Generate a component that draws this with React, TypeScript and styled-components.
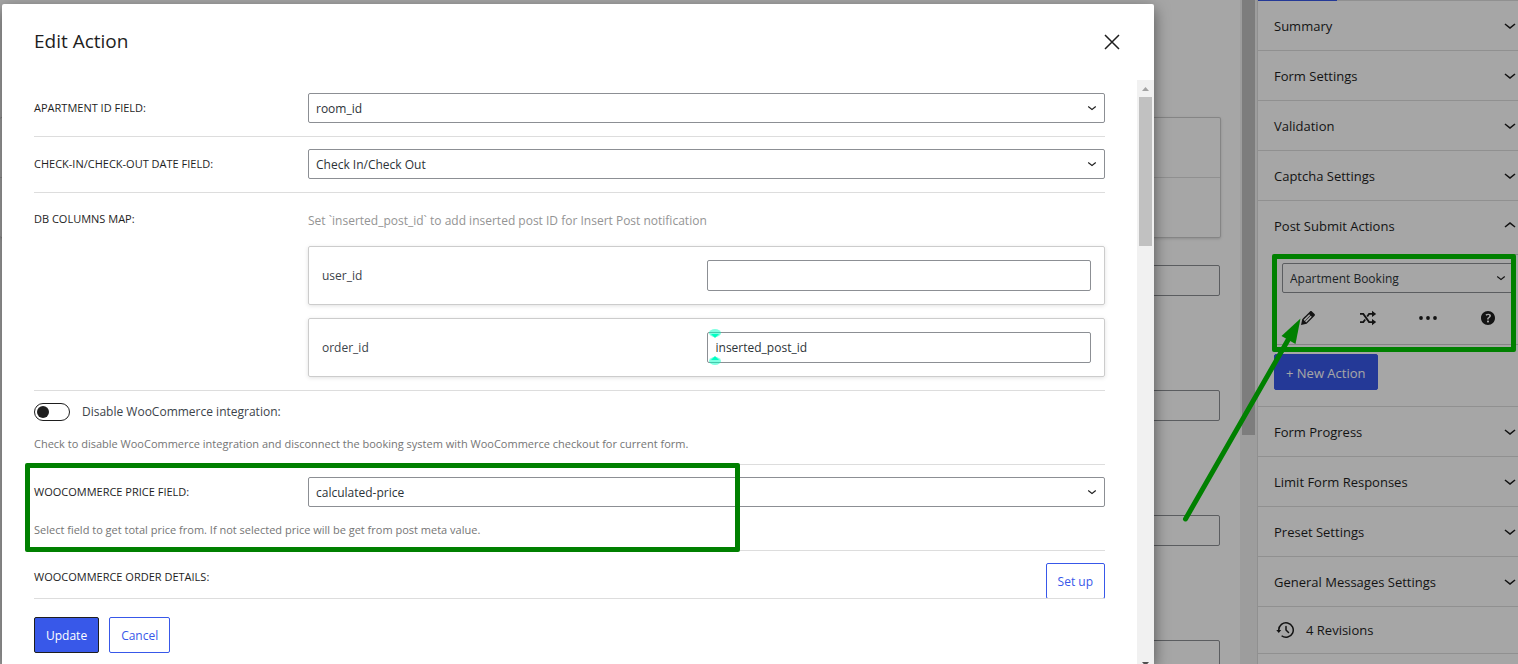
import React from "react";
import styled, { createGlobalStyle } from "styled-components";

const Global = createGlobalStyle`
  *, *::before, *::after { box-sizing: border-box; }
  body {
    margin: 0;
    font-family: "Open Sans", "Noto Sans", sans-serif;
    font-size: 13px;
    line-height: 20px;
    color: #1e1e1e;
    background: #fff;
  }
  button, input, select { font: inherit; color: inherit; }
`;

const Screen = styled.div`
  position: relative;
  display: flex;
  height: 100vh;
  min-height: 400px;
  overflow: hidden;
`;

/* Editor canvas behind the dialog */
const Canvas = styled.main`
  flex: 1;
  min-width: 0;
  overflow: hidden;
  display: flex;
  flex-direction: column;
  padding: 117px 20px 0 0;
`;

const FieldGroup = styled.div`
  flex: none;
  height: 121px;
  margin-right: -1px;
  border: 1px solid #ccc;
  border-left: 0;
  border-radius: 2px;
  box-shadow: 0 1px 3px rgba(0, 0, 0, 0.15);
`;

const GroupRow = styled.div`
  height: 60px;
  border-bottom: 1px solid #ddd;
`;

const CanvasInput = styled.input`
  flex: none;
  height: 31px;
  margin: 27px 0 67px 200px;
  border: 1px solid #8c8f94;
  border-radius: 2px;
`;

const CanvasScroll = styled.div`
  flex: none;
  width: 17px;
  padding: 0 2px;
  background: #f1f1f1;
`;

const CanvasThumb = styled.div`
  height: 435px;
  background: #c1c1c1;
`;

const Sidebar = styled.aside`
  flex: none;
  width: 261px;
  border-left: 1px solid #ddd;
  overflow: hidden;
`;

const TabLine = styled.div`
  height: 1px;
  background: #ddd;
  &::before {
    content: "";
    display: block;
    width: 79px;
    height: 1px;
    background: #3858e9;
  }
`;

const Section = styled.section`
  border-bottom: 1px solid #ddd;
`;

const SectionToggle = styled.button`
  display: flex;
  align-items: center;
  justify-content: space-between;
  width: 100%;
  height: 49px;
  padding: 0 0 0 16px;
  border: 0;
  background: none;
  font-weight: 500;
  text-align: left;
`;

const ActionPanel = styled.div`
  padding: 4px 0 16px 16px;
`;

const ActionCard = styled.div`
  height: 91px;
  margin-bottom: 9px;
  padding: 8px 0 0 7px;
  border: 1px solid #ccc;
  border-right: 0;
`;

const ActionIcons = styled.div`
  display: grid;
  grid-template-columns: repeat(4, 60px);
  margin: 9px 0 0 -4px;
`;

const IconButton = styled.button`
  display: flex;
  align-items: center;
  justify-content: center;
  height: 32px;
  padding: 0;
  border: 0;
  background: none;
`;

const RevisionsButton = styled.button`
  display: flex;
  align-items: center;
  gap: 8px;
  width: 100%;
  height: 46px;
  padding: 0 16px;
  border: 0;
  background: none;
  font-weight: 500;
`;

const Button = styled.button<{ $kind: "primary" | "outline"; $focused?: boolean }>`
  height: 36px;
  padding: 1px 11px 0;
  border: 1px solid ${(p) => (p.$focused ? "#1e1e1e" : "#3858e9")};
  border-radius: 2px;
  background: ${(p) => (p.$kind === "primary" ? "#3858e9" : "#fff")};
  color: ${(p) => (p.$kind === "primary" ? "#fff" : "#3858e9")};
  font-weight: ${(p) => (p.$focused ? 500 : 400)};
  white-space: nowrap;
`;

const SelectBox = styled.div<{ $inset?: boolean }>`
  position: relative;
  flex: 1;
  min-width: 0;
  margin-right: ${(p) => (p.$inset ? "4px" : "0")};
  svg {
    position: absolute;
    right: 4px;
    top: 6px;
    pointer-events: none;
  }
`;

const Select = styled.select`
  display: block;
  appearance: none;
  width: 100%;
  height: 30px;
  padding: 1px 24px 0 7px;
  border: 1px solid #8c8f94;
  border-radius: 2px;
  background: #fff;
  color: #2c3338;
  font-size: 12px;
`;

const Scrim = styled.div`
  position: absolute;
  inset: 0;
  background: rgba(0, 0, 0, 0.35);
`;

/* Dialog */
const Dialog = styled.div`
  position: absolute;
  inset: 4px 364px 0 2px;
  display: flex;
  flex-direction: column;
  border-radius: 2px 2px 0 0;
  background: #fff;
  box-shadow: 0 5px 15px rgba(0, 0, 0, 0.5);
  font-size: 12px;
`;

const DialogHeader = styled.header`
  flex: none;
  display: flex;
  align-items: center;
  justify-content: space-between;
  height: 76px;
  padding: 0 30px 0 32px;
`;

const Title = styled.h1`
  margin: 0;
  padding-bottom: 2px;
  font-size: 19px;
  line-height: 24px;
  font-weight: 500;
`;

const CloseButton = styled.button`
  display: flex;
  padding: 0;
  border: 0;
  background: none;
`;

const DialogMain = styled.div`
  flex: 1;
  min-height: 0;
  display: flex;
`;

const DialogContent = styled.div`
  flex: 1;
  min-width: 0;
  display: flex;
  flex-direction: column;
`;

const Fields = styled.div`
  flex: 1;
  min-height: 0;
  overflow: hidden;
  padding: 1px 32px 0;
`;

const Row = styled.div<{ $hinted?: boolean }>`
  position: relative;
  padding: 12px 0 ${(p) => (p.$hinted ? 11 : 13)}px;
  border-bottom: 1px solid #ddd;
`;

const Line = styled.div<{ $top?: boolean }>`
  display: flex;
  align-items: ${(p) => (p.$top ? "flex-start" : "center")};
  justify-content: space-between;
`;

const Label = styled.label`
  flex: none;
  width: 274px;
  font-size: 11px;
  line-height: 28px;
  font-weight: 500;
  text-transform: uppercase;
`;

const MapColumn = styled.div`
  flex: 1;
  min-width: 0;
  display: flex;
  flex-direction: column;
  gap: 13px;
`;

const MapHint = styled.p`
  margin: 0;
  padding: 6px 0 2px;
  color: #949494;
`;

const MapCard = styled.div`
  display: grid;
  grid-template-columns: 1fr 1fr;
  align-items: center;
  padding: 13px;
  border: 1px solid #ccc;
  border-radius: 2px;
  box-shadow: 0 1px 4px rgba(0, 0, 0, 0.12);
  color: #3c434a;
`;

const InputBox = styled.div`
  position: relative;
  svg {
    position: absolute;
    left: 1px;
    top: -4px;
  }
`;

const TextInput = styled.input`
  display: block;
  width: 100%;
  height: 31px;
  padding: 0 8px;
  border: 1px solid #8c8f94;
  border-radius: 2px;
  color: #2c3338;
`;

const Switch = styled.input`
  appearance: none;
  flex: none;
  width: 36px;
  height: 18px;
  margin: 0;
  padding: 2px;
  border: 1px solid #1e1e1e;
  border-radius: 9px;
  background: #fff;
  &::before {
    content: "";
    display: block;
    width: 12px;
    height: 12px;
    border-radius: 50%;
    background: #1e1e1e;
  }
`;

const SwitchLabel = styled.label`
  display: flex;
  align-items: center;
  gap: 12px;
  line-height: 18px;
  color: #3c434a;
`;

const Hint = styled.p`
  margin: 0;
  padding-top: 14px;
  font-size: 11px;
  line-height: 18px;
  color: #757575;
`;

const DialogFooter = styled.footer`
  flex: none;
  display: flex;
  gap: 10px;
  height: 66px;
  margin: 0 32px;
  padding-top: 18px;
  border-top: 1px solid #ddd;
`;

const DialogScroll = styled.div`
  flex: none;
  display: flex;
  flex-direction: column;
  align-items: center;
  width: 17px;
  background: #f1f1f1;
`;

const DialogThumb = styled.div`
  width: 13px;
  height: 149px;
  background: #c1c1c1;
`;

const ScrollArrow = styled.svg<{ $end?: boolean }>`
  flex: none;
  display: block;
  margin-top: ${(p) => (p.$end ? "auto" : "0")};
  margin-bottom: ${(p) => (p.$end ? "-9px" : "0")};
`;

/* Callouts drawn over the page */
const PriceFrame = styled.div`
  position: absolute;
  inset: -2px auto -2px -9px;
  width: 715px;
  border: 5px solid #008000;
  border-radius: 2px;
  pointer-events: none;
`;

const ActionFrame = styled.div`
  position: absolute;
  top: 254px;
  right: 2px;
  width: 244px;
  height: 98px;
  border: 5px solid #008000;
  border-radius: 2px;
  pointer-events: none;
`;

const Arrow = styled.svg`
  position: absolute;
  top: 310px;
  right: 208px;
  pointer-events: none;
`;

const ChevronDown = ({ size = 16 }: { size?: number }) => (
  <svg width={size} height={size} viewBox={size === 16 ? "4 5 16 16" : "0 1 24 24"} aria-hidden="true">
    <path fill="currentColor" d="M17.5 11.6L12 16l-5.5-4.4.9-1.2L12 14l4.5-3.6 1 1.2z" />
  </svg>
);

const ChevronUp = () => (
  <svg width="16" height="16" viewBox="4 4 16 16" aria-hidden="true">
    <path fill="currentColor" d="M6.5 12.4L12 8l5.5 4.4-.9 1.2L12 10l-4.5 3.6-1-1.2z" />
  </svg>
);

const Pencil = () => (
  <svg width="20" height="20" viewBox="0 0 20 20" aria-hidden="true">
    <path fill="currentColor" d="M13.89 3.39l2.71 2.72c.46.46.42 1.24.03 1.64l-8.01 8.02-5.56 1.16 1.16-5.58s7.6-7.63 7.99-8.03c.39-.39 1.22-.39 1.68.07zm-2.73 2.79l-5.59 5.61 1.11 1.11 5.54-5.65zm-2.97 8.23l5.58-5.6-1.07-1.08-5.59 5.6z" />
  </svg>
);

const Shuffle = () => (
  <svg width="20" height="20" viewBox="0 0 20 20" aria-hidden="true">
    <path
      fill="none"
      stroke="currentColor"
      strokeWidth="1.8"
      d="M2 5.900h3.300l5.800 8.200H15M2 14.100h3.300l1.900-2.600M9.200 8.500l1.900-2.600H15"
    />
    <path fill="currentColor" d="M14 2.800L18.200 5.900L14 9zM14 11L18.200 14.100L14 17.200z" />
  </svg>
);

const Dots = () => (
  <svg width="20" height="20" viewBox="0 0 20 20" aria-hidden="true">
    <g fill="currentColor">
      <circle cx="3" cy="10" r="1.900" />
      <circle cx="10" cy="10" r="1.900" />
      <circle cx="17" cy="10" r="1.900" />
    </g>
  </svg>
);

const Help = () => (
  <svg width="20" height="20" viewBox="0 0 20 20" aria-hidden="true">
    <path fill="currentColor" d="M17 10c0-3.870-3.140-7-7-7-3.870 0-7 3.130-7 7s3.130 7 7 7c3.860 0 7-3.130 7-7zm-6.300 1.480H9.140v-.43c0-.38.08-.7.24-.98s.46-.57.88-.89c.41-.29.68-.53.81-.71.14-.18.2-.39.2-.62 0-.25-.09-.44-.28-.58-.19-.13-.45-.19-.79-.19-.58 0-1.250.19-2 .57l-.64-1.280c.87-.49 1.800-.74 2.770-.74.81 0 1.450.2 1.920.58.48.39.71.91.71 1.550 0 .43-.09.8-.29 1.110-.19.32-.57.67-1.110 1.060-.38.28-.61.49-.71.63-.1.15-.15.34-.15.57v.35zm-1.470 2.740c-.18-.17-.27-.42-.27-.73 0-.33.08-.58.26-.75s.43-.25.77-.25c.32 0 .57.09.75.26s.27.42.27.74c0 .3-.09.55-.27.72-.18.18-.43.27-.75.27-.33 0-.58-.09-.76-.26z" />
  </svg>
);

const History = () => (
  <svg width="24" height="24" viewBox="0 0 24 24" aria-hidden="true">
    <path fill="currentColor" d="M5.5 12h1.75l-2.5 3-2.5-3H4a8 8 0 113.134 6.35l.907-1.194A6.5 6.5 0 105.5 12zm9.53 1.97l-2.28-2.28V8.5a.75.75 0 00-1.5 0V12a.747.747 0 00.218.529l1.282-.84-1.28.842 2.5 2.5a.75.75 0 101.06-1.061z" />
  </svg>
);

const CaretMark = () => (
  <svg width="14" height="38" viewBox="0 0 14 38" aria-hidden="true">
    <ellipse cx="7" cy="5" rx="6" ry="4" fill="#00ffc3" fillOpacity="0.5" />
    <path d="M3 6h8l-4 4z" fill="#00ffc3" />
    <ellipse cx="7" cy="33" rx="6" ry="4" fill="#00ffc3" fillOpacity="0.5" />
    <path d="M3 32h8l-4-4z" fill="#00ffc3" />
  </svg>
);

function Dropdown({ id, value, inset, label }: { id: string; value: string; inset?: boolean; label?: string }) {
  return (
    <SelectBox $inset={inset}>
      <Select id={id} aria-label={label} defaultValue={value}>
        <option>{value}</option>
      </Select>
      <ChevronDown size={18} />
    </SelectBox>
  );
}

function Panel({ title, open, children }: { title: string; open?: boolean; children?: React.ReactNode }) {
  return (
    <Section>
      <SectionToggle aria-expanded={!!open}>
        {title}
        {open ? <ChevronUp /> : <ChevronDown />}
      </SectionToggle>
      {children}
    </Section>
  );
}

export default function App() {
  return (
    <Screen>
      <Global />
      <Canvas>
        <FieldGroup>
          <GroupRow />
        </FieldGroup>
        {[1, 2, 3, 4].map((n) => (
          <CanvasInput key={n} aria-label={`Form field ${n}`} />
        ))}
      </Canvas>
      <CanvasScroll>
        <CanvasThumb />
      </CanvasScroll>
      <Sidebar>
        <TabLine />
        {["Summary", "Form Settings", "Validation", "Captcha Settings"].map((t) => (
          <Panel key={t} title={t} />
        ))}
        <Panel title="Post Submit Actions" open>
          <ActionPanel>
            <ActionCard>
              <Dropdown id="action" value="Apartment Booking" label="Action type" inset />
              <ActionIcons>
                <IconButton aria-label="Edit"><Pencil /></IconButton>
                <IconButton aria-label="Conditions"><Shuffle /></IconButton>
                <IconButton aria-label="More"><Dots /></IconButton>
                <IconButton aria-label="Help"><Help /></IconButton>
              </ActionIcons>
            </ActionCard>
            <Button $kind="primary">+ New Action</Button>
          </ActionPanel>
        </Panel>
        {["Form Progress", "Limit Form Responses", "Preset Settings", "General Messages Settings"].map((t) => (
          <Panel key={t} title={t} />
        ))}
        <Section>
          <RevisionsButton>
            <History />
            4 Revisions
          </RevisionsButton>
        </Section>
      </Sidebar>

      <Scrim />

      <Dialog role="dialog" aria-labelledby="dialog-title">
        <DialogHeader>
          <Title id="dialog-title">Edit Action</Title>
          <CloseButton aria-label="Close">
            <svg width="24" height="24" viewBox="0 0 24 24" aria-hidden="true">
              <path d="M5 5l14 14M19 5L5 19" stroke="#1e1e1e" strokeWidth="1.5" />
            </svg>
          </CloseButton>
        </DialogHeader>
        <DialogMain>
          <DialogContent>
            <Fields>
              <Row>
                <Line>
                  <Label htmlFor="apartment">Apartment ID field:</Label>
                  <Dropdown id="apartment" value="room_id" />
                </Line>
              </Row>
              <Row>
                <Line>
                  <Label htmlFor="dates">Check-in/Check-out date field:</Label>
                  <Dropdown id="dates" value="Check In/Check Out" />
                </Line>
              </Row>
              <Row>
                <Line $top>
                  <Label as="span">DB columns map:</Label>
                  <MapColumn>
                    <MapHint>Set `inserted_post_id` to add inserted post ID for Insert Post notification</MapHint>
                    <MapCard>
                      <label htmlFor="user">user_id</label>
                      <TextInput id="user" />
                    </MapCard>
                    <MapCard>
                      <label htmlFor="order">order_id</label>
                      <InputBox>
                        <TextInput id="order" defaultValue="inserted_post_id" />
                        <CaretMark />
                      </InputBox>
                    </MapCard>
                  </MapColumn>
                </Line>
              </Row>
              <Row $hinted>
                <SwitchLabel>
                  <Switch type="checkbox" role="switch" />
                  Disable WooCommerce integration:
                </SwitchLabel>
                <Hint>
                  Check to disable WooCommerce integration and disconnect the booking system with WooCommerce checkout
                  for current form.
                </Hint>
              </Row>
              <Row $hinted>
                <Line>
                  <Label htmlFor="price">WooCommerce Price field:</Label>
                  <Dropdown id="price" value="calculated-price" />
                </Line>
                <Hint>Select field to get total price from. If not selected price will be get from post meta value.</Hint>
                <PriceFrame />
              </Row>
              <Row>
                <Line $top>
                  <Label as="span">WooCommerce order details:</Label>
                  <Button $kind="outline">Set up</Button>
                </Line>
              </Row>
            </Fields>
            <DialogFooter>
              <Button $kind="primary" $focused>Update</Button>
              <Button $kind="outline">Cancel</Button>
            </DialogFooter>
          </DialogContent>
          <DialogScroll>
            <ScrollArrow width="17" height="17" viewBox="0 0 17 17" aria-hidden="true">
              <path d="M5 11h7L8.500 7z" fill="#a3a3a3" />
            </ScrollArrow>
            <DialogThumb />
            <ScrollArrow $end width="17" height="17" viewBox="0 0 17 17" aria-hidden="true">
              <path d="M5 6h7L8.500 10z" fill="#505050" />
            </ScrollArrow>
          </DialogScroll>
        </DialogMain>
      </Dialog>

      <ActionFrame />
      <Arrow width="130" height="220" viewBox="0 0 130 220" aria-hidden="true">
        <path d="M5.500 209L108 30" stroke="#008000" strokeWidth="5" strokeLinecap="round" />
        <path d="M120.500 8.500L101.500 26L115.500 34z" fill="#008000" />
      </Arrow>
    </Screen>
  );
}
